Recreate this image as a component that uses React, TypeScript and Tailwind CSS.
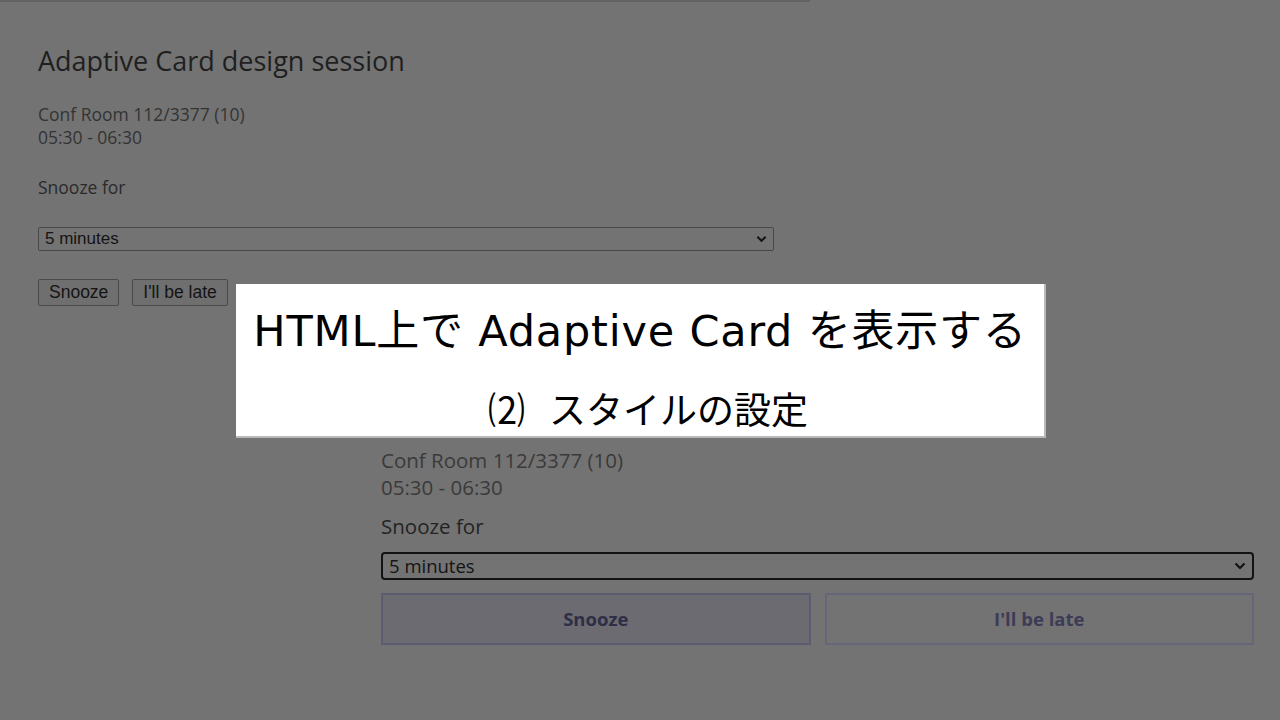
import React from 'react';

const ui = { fontFamily: '"Open Sans", "Noto Sans", sans-serif' };
const arial = { fontFamily: '"Liberation Sans", Arial, sans-serif' };
const jp = { fontFamily: '"DejaVu Sans", "Noto Sans CJK JP", sans-serif' };
const jpSub = { fontFamily: '"Noto Sans CJK JP", sans-serif' };

function Chevron({ className }: { className?: string }) {
  return (
    <svg viewBox="0 0 12 8" className={className} fill="none" stroke="currentColor" strokeWidth="2.2">
      <path d="M1.5 1.5 L6 6 L10.5 1.5" />
    </svg>
  );
}

// Card rendered with the default host styles
function PlainCard() {
  return (
    <div className="pl-[38px] pt-[44px] w-[774px]" style={ui}>
      <div className="text-[27px] leading-[30px] text-[#1f1f1f]">Adaptive Card design session</div>
      <div className="mt-[27px] text-[17.5px] leading-[23px] text-[#333333]">
        <div>Conf Room 112/3377 (10)</div>
        <div>05:30 - 06:30</div>
      </div>
      <div className="mt-[27px] text-[17.5px] leading-[23px] text-[#2a2a2a]">Snooze for</div>
      <div
        className="mt-[28px] h-[24px] flex items-center justify-between border border-[#484848] rounded-[2px] pl-[6px] pr-[6px] text-[17px] text-[#141414]"
        style={arial}
      >
        <span>5 minutes</span>
        <Chevron className="w-[11px] h-[8px] text-[#141414]" />
      </div>
      <div className="mt-[28px] flex gap-[13px]" style={arial}>
        <div className="h-[27px] px-[10px] flex items-center border border-[#4a4a4a] rounded-[2px] bg-[#6f6f6f] text-[17.5px] text-[#141414]">
          Snooze
        </div>
        <div className="h-[27px] px-[10px] flex items-center border border-[#4a4a4a] rounded-[2px] bg-[#6f6f6f] text-[17.5px] text-[#141414]">
          I'll be late
        </div>
      </div>
    </div>
  );
}

// Same card after the custom stylesheet is applied (its heading sits under the caption)
function StyledCard() {
  return (
    <div className="ml-[381px] mr-[26px] mt-[141px]" style={ui}>
      <div className="text-[20.5px] leading-[27px] text-[#3a3a3a]">
        <div>Conf Room 112/3377 (10)</div>
        <div>05:30 - 06:30</div>
      </div>
      <div className="mt-[12px] text-[20.5px] leading-[27px] text-[#232323]">Snooze for</div>
      <div className="mt-[12px] h-[28px] flex items-center justify-between border-2 border-[#121212] rounded-[4px] pl-[6px] pr-[6px] text-[18.5px] text-[#141414]">
        <span>5 minutes</span>
        <Chevron className="w-[12px] h-[8px] text-[#141414]" />
      </div>
      <div className="mt-[13px] grid grid-cols-2 gap-[14px]">
        <div className="h-[52px] flex items-center justify-center border-2 border-[#5c5c70] bg-[#6b6b71] text-[18.5px] font-bold text-[#2e2e46]">
          Snooze
        </div>
        <div className="h-[52px] flex items-center justify-center border-2 border-[#66667a] bg-[#737373] text-[18.5px] font-bold text-[#3c3c56]">
          I'll be late
        </div>
      </div>
    </div>
  );
}

export default function App() {
  return (
    <div className="relative w-[1280px] h-[720px] overflow-hidden bg-[#737373]">
      <div className="w-[810px] h-[2px] bg-[#626262]" />
      <PlainCard />
      <StyledCard />

      {/* title caption over the page */}
      <div className="absolute left-[236px] top-[284px] w-[810px] h-[154px] bg-white border-r-2 border-b-2 border-[#b9b9b9] flex flex-col items-center text-black">
        <div className="mt-[22px] text-[43px] leading-[50px] tracking-[0.8px]" style={jp}>
          HTML上で Adaptive Card を表示する
        </div>
        <div className="mt-[32px] ml-[16px] flex items-center text-[37px] leading-[40px]" style={jpSub}>
          <span>⑵</span>
          <span className="ml-[24px]">スタイルの設定</span>
        </div>
      </div>
    </div>
  );
}
